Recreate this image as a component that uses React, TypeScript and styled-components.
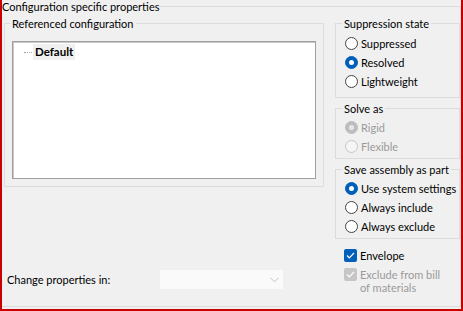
import styled, { createGlobalStyle } from "styled-components";

const GlobalStyle = createGlobalStyle`
  html, body {
    margin: 0;
    padding: 0;
    background: #f0f0f0;
  }
  body {
    font-family: Lato, "Noto Sans", sans-serif;
    font-size: 11px;
    color: #000;
  }
`;

const Frame = styled.div`
  width: 463px;
  height: 311px;
  box-sizing: border-box;
  border: 2px solid #c80000;
  border-top: none;
  background: #f0f0f0;
  overflow: hidden;
`;

const Outer = styled.fieldset`
  margin: 0;
  padding: 4px 0 0 0;
  height: 307px;
  box-sizing: border-box;
  border: 1px solid #dcdcdc;
  border-left: none;
  display: flex;
  gap: 11px;
  min-width: 0;
`;

const Legend = styled.legend<{ $shift?: number }>`
  padding: 0 2px;
  margin-left: ${(p) => p.$shift ?? -2}px;
  line-height: 13px;
  white-space: nowrap;
`;

const OuterLegend = styled.legend`
  padding: 0;
  line-height: 13px;
  white-space: nowrap;
`;

const LeftCol = styled.div`
  display: flex;
  flex-direction: column;
  padding-left: 2px;
`;

const Group = styled.fieldset<{ $w: number; $h?: number; $pt?: number; $pb?: number }>`
  margin: 0;
  width: ${(p) => p.$w}px;
  ${(p) => (p.$h ? `height: ${p.$h}px;` : "")}
  box-sizing: border-box;
  border: 1px solid #dcdcdc;
  padding: ${(p) => p.$pt ?? 4}px 7px ${(p) => p.$pb ?? 6}px 7px;
  min-width: 0;
`;

const TreeBox = styled.div`
  margin-top: 11px;
  height: 138px;
  background: #fff;
  border: 1px solid #a0a0a0;
  box-shadow: inset 1px 1px 0 #c8c8c8;
  box-sizing: border-box;
  padding: 2px 0 0 11px;
`;

const TreeItem = styled.div`
  display: flex;
  align-items: center;
`;

const Dots = styled.span`
  width: 8px;
  border-top: 1px dotted #a0a0a0;
  margin-right: 1px;
`;

const ItemLabel = styled.span`
  background: #f0f0f0;
  font-weight: bold;
  font-size: 11.5px;
  padding: 1px 2px;
  line-height: 14px;
`;

const BottomRow = styled.div`
  display: flex;
  align-items: center;
  margin-top: auto;
  margin-bottom: 17px;
  padding-left: 3px;
`;

const PropsLabel = styled.span`
  width: 153px;
`;

const Dropdown = styled.div`
  width: 123px;
  height: 19px;
  background: #fafafa;
  display: flex;
  align-items: center;
  justify-content: flex-end;
  padding-right: 4px;
  box-sizing: border-box;
`;

const RightCol = styled.div`
  display: flex;
  flex-direction: column;
  gap: 4px;
`;

const Row = styled.label<{ $disabled?: boolean }>`
  display: flex;
  align-items: center;
  height: 19px;
  gap: 3px;
  padding-left: 2px;
  white-space: nowrap;
  color: ${(p) => (p.$disabled ? "#9a9a9a" : "#000")};
`;

const Dot = styled.span<{ $on?: boolean; $disabled?: boolean }>`
  width: 13px;
  height: 13px;
  border-radius: 50%;
  box-sizing: border-box;
  flex: none;
  position: relative;
  background: ${(p) =>
    p.$on ? (p.$disabled ? "#bdbdbd" : "#005fb8") : p.$disabled ? "#f5f5f5" : "#fff"};
  border: 1px solid
    ${(p) => (p.$on ? (p.$disabled ? "#bdbdbd" : "#005fb8") : p.$disabled ? "#c6c6c6" : "#444")};
  &::after {
    content: "";
    display: ${(p) => (p.$on ? "block" : "none")};
    position: absolute;
    left: 3px;
    top: 3px;
    width: 5px;
    height: 5px;
    border-radius: 50%;
    background: ${(p) => (p.$disabled ? "#e8e8e8" : "#fff")};
  }
`;

const Checks = styled.div`
  display: flex;
  flex-direction: column;
  padding: 0 0 0 9px;
`;

const CheckRow = styled.div<{ $disabled?: boolean }>`
  display: flex;
  align-items: flex-start;
  gap: 3px;
  line-height: 13px;
  margin-top: 6px;
  color: ${(p) => (p.$disabled ? "#9a9a9a" : "#000")};
`;

const Box = styled.span<{ $disabled?: boolean }>`
  width: 13px;
  height: 13px;
  border-radius: 2px;
  flex: none;
  display: flex;
  align-items: center;
  justify-content: center;
  background: ${(p) => (p.$disabled ? "#c6c6c6" : "#005fb8")};
`;

const Check = ({ color }: { color: string }) => (
  <svg width="9" height="7" viewBox="0 0 9 7">
    <path d="M1 3.5 L3.3 5.8 L8 1" fill="none" stroke={color} strokeWidth="1.2" />
  </svg>
);

type Opt = { label: string; on?: boolean };

const RadioGroup = ({
  title,
  opts,
  disabled,
  pt,
  pb,
}: {
  title: string;
  opts: Opt[];
  disabled?: boolean;
  pt: number;
  pb?: number;
}) => (
  <Group $w={125} $pt={pt} $pb={pb}>
    <Legend $shift={-1}>{title}</Legend>
    {opts.map((o) => (
      <Row key={o.label} $disabled={disabled}>
        <Dot $on={o.on} $disabled={disabled} />
        {o.label}
      </Row>
    ))}
  </Group>
);

export default function App() {
  return (
    <Frame>
      <GlobalStyle />
      <Outer>
        <OuterLegend>Configuration specific properties</OuterLegend>
        <LeftCol>
          <Group $w={320} $h={170} $pt={0}>
            <Legend>Referenced configuration</Legend>
            <TreeBox>
              <TreeItem>
                <Dots />
                <ItemLabel>Default</ItemLabel>
              </TreeItem>
            </TreeBox>
          </Group>
          <BottomRow>
            <PropsLabel>Change properties in:</PropsLabel>
            <Dropdown>
              <svg width="9" height="6" viewBox="0 0 9 6">
                <path d="M0.5 0.8 L4.5 4.8 L8.5 0.8" fill="none" stroke="#c2c2c2" strokeWidth="1" />
              </svg>
            </Dropdown>
          </BottomRow>
        </LeftCol>
        <RightCol>
          <RadioGroup
            title="Suppression state"
            pt={4}
            opts={[{ label: "Suppressed" }, { label: "Resolved", on: true }, { label: "Lightweight" }]}
          />
          <RadioGroup
            title="Solve as"
            disabled
            pt={3}
            pb={2}
            opts={[{ label: "Rigid", on: true }, { label: "Flexible" }]}
          />
          <RadioGroup
            title="Save assembly as part"
            pt={3}
            pb={2}
            opts={[
              { label: "Use system settings", on: true },
              { label: "Always include" },
              { label: "Always exclude" },
            ]}
          />
          <Checks>
            <CheckRow>
              <Box>
                <Check color="#fff" />
              </Box>
              Envelope
            </CheckRow>
            <CheckRow $disabled>
              <Box $disabled>
                <Check color="#fff" />
              </Box>
              <span>
                Exclude from bill
                <br />
                of materials
              </span>
            </CheckRow>
          </Checks>
        </RightCol>
      </Outer>
    </Frame>
  );
}
